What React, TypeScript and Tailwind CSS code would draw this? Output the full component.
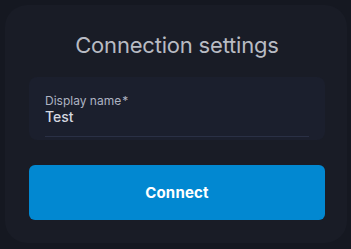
import React from 'react';

const App = () => {
  return (
    <div className="w-[351px] h-[249px] bg-[#151821] p-[5px] font-['Inter',sans-serif]">
      <div className="w-[342px] h-[238px] rounded-[22px] bg-[#191c26] pl-[24px] pr-[22px] pt-[26px]">
        <h1 className="text-center text-[22px] leading-[28px] text-[#b8bbc3] tracking-[-0.2px]">
          Connection settings
        </h1>

        <div className="mt-[18px] h-[63px] rounded-[8px] bg-[#1b1f2d] px-[16px] pt-[16px]">
          <label className="block text-[12px] leading-[15px] text-[#aeb3c2]">
            Display name<span className="ml-[1px]">*</span>
          </label>
          <div className="text-[14px] leading-[18px] font-medium text-[#d5d8e0]">Test</div>
          <div className="mt-[10px] h-px bg-[#2a3045]" />
        </div>

        <button className="mt-[25px] w-full h-[55px] rounded-[6px] bg-[#0288d1] pt-[2px] text-white text-[15px] font-bold tracking-[0.2px]">
          Connect
        </button>
      </div>
    </div>
  );
};

export default App;
